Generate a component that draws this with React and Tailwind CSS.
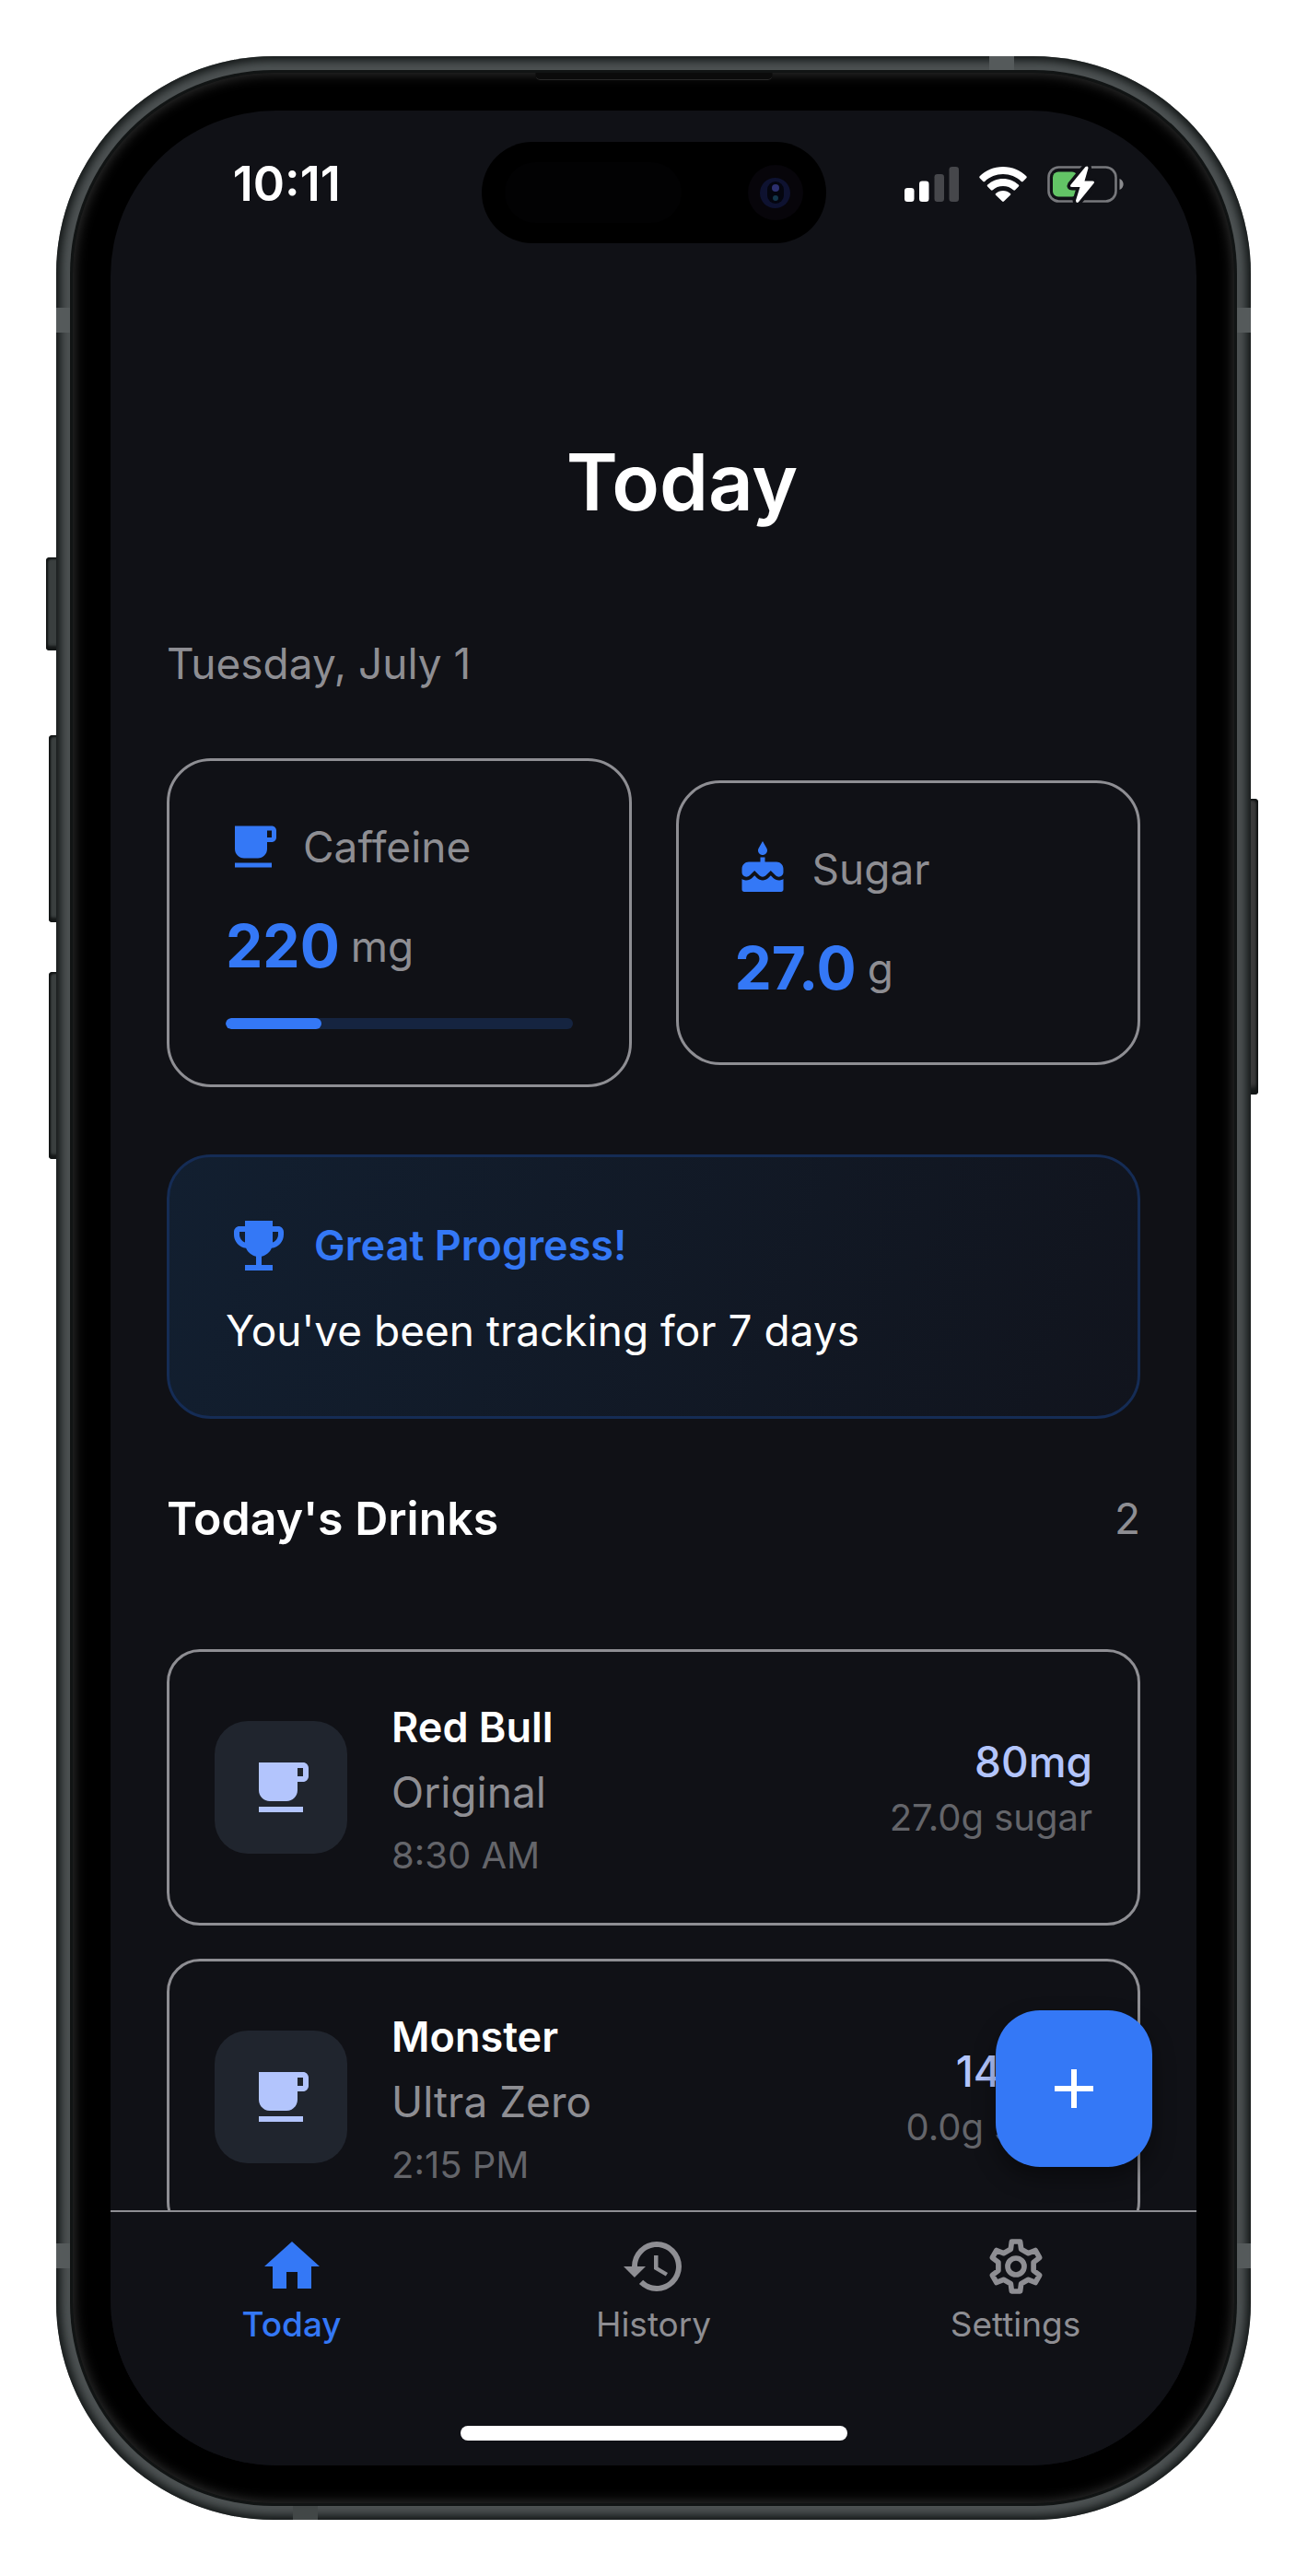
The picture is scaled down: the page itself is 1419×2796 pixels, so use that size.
const inter = "font-['Inter','Liberation_Sans',sans-serif]";

function Icon({ d, className }) {
  return (
    <svg viewBox="0 0 24 24" fill="currentColor" fillRule="evenodd" aria-hidden="true" className={className}>
      <path d={d} />
    </svg>
  );
}

const CUP = "M20 3H4v10c0 2.21 1.79 4 4 4h6c2.21 0 4-1.79 4-4v-3h2c1.11 0 2-.9 2-2V5c0-1.11-.89-2-2-2zm0 5h-2V5h2v3zM4 19h16v2H4z";
const CAKE = "M12 6c1.11 0 2-.9 2-2 0-.38-.1-.73-.29-1.03L12 0l-1.71 2.97c-.19.3-.29.65-.29 1.03 0 1.1.9 2 2 2zm4.6 9.99l-1.07-1.07-1.08 1.07c-1.3 1.3-3.58 1.31-4.89 0l-1.07-1.07-1.09 1.07C6.75 16.64 5.88 17 4.96 17c-.73 0-1.4-.23-1.96-.61V21c0 .55.45 1 1 1h16c.55 0 1-.45 1-1v-4.61c-.56.38-1.23.61-1.96.61-.92 0-1.79-.36-2.44-1.01zM18 9h-5V7h-2v2H6c-1.66 0-3 1.34-3 3v1.54c0 1.08.88 1.96 1.96 1.96.52 0 1.02-.2 1.38-.57l2.14-2.13 2.13 2.13c.74.74 2.03.74 2.77 0l2.14-2.13 2.13 2.13c.37.37.86.57 1.38.57 1.08 0 1.96-.88 1.96-1.96V12C21 10.34 19.66 9 18 9z";
const TROPHY = "M19 5h-2V3H7v2H5c-1.1 0-2 .9-2 2v1c0 2.55 1.92 4.63 4.39 4.94.63 1.5 1.98 2.63 3.61 2.96V19H7v2h10v-2h-4v-3.1c1.63-.33 2.98-1.46 3.61-2.96C19.08 12.63 21 10.55 21 8V7c0-1.1-.9-2-2-2zM5 8V7h2v3.82C5.84 10.4 5 9.3 5 8zm14 0c0 1.3-.84 2.4-2 2.82V7h2v1z";
const HOME = "M10 20v-6h4v6h5v-8h3L12 3 2 12h3v8z";
const HISTORY = "M13 3a9 9 0 0 0-9 9H1l3.89 3.89.07.14L9 12H6c0-3.87 3.13-7 7-7s7 3.13 7 7-3.13 7-7 7c-1.93 0-3.68-.79-4.94-2.06l-1.42 1.42A8.954 8.954 0 0 0 13 21a9 9 0 0 0 0-18zm-1 5v5l4.28 2.54.72-1.21-3.5-2.08V8H12z";
const PLUS = "M19 13h-6v6h-2v-6H5v-2h6V5h2v6h6z";

const TOOTH = [[-1.88, -6.27], [-1.53, -9], [1.53, -9], [1.88, -6.27]];
const GEAR_POINTS = [0, 60, 120, 180, 240, 300]
  .flatMap((deg) => {
    const c = Math.cos((deg * Math.PI) / 180);
    const s = Math.sin((deg * Math.PI) / 180);
    return TOOTH.map(([x, y]) => `${(12 + x * c - y * s).toFixed(2)},${(12 + x * s + y * c).toFixed(2)}`);
  })
  .join(" ");

function Gear({ className }) {
  return (
    <svg viewBox="0 0 24 24" fill="none" stroke="currentColor" strokeWidth="1.900" strokeLinejoin="round" aria-hidden="true" className={className}>
      <polygon points={GEAR_POINTS} />
      <circle cx="12" cy="12" r="3" />
    </svg>
  );
}

function StatusIcons() {
  return (
    <div className="flex items-center gap-[22px] text-white">
      <svg viewBox="0 0 59 38" className="h-[38px] w-[59px]" role="img" aria-label="Signal">
        <rect x="0" y="23" width="10.500" height="15" rx="3.300" fill="#fff" />
        <rect x="16" y="15.600" width="10.500" height="22.400" rx="3.300" fill="#fff" />
        <rect x="32.500" y="8" width="10.500" height="30" rx="3.300" fill="#46474b" />
        <rect x="48.500" y="0" width="10.500" height="38" rx="3.300" fill="#46474b" />
      </svg>
      <svg viewBox="0 0 52 38" className="h-[38px] w-[52px]" role="img" aria-label="Wi-Fi">
        <path fill="#fff" d="M26 0C36 0 45 4 51.300 10.300q.9.900 0 1.900l-3.700 3.700q-.9.900-1.800 0C40.500 10.900 33.500 8 26 8S11.500 10.900 6.200 15.900q-.9.900-1.800 0L.7 12.200q-.9-1 0-1.900C7 4 16 0 26 0zM26 13c6.500 0 12.400 2.500 16.800 6.600q1 .9 0 1.900l-3.700 3.700q-.9.900-1.900 0C34.300 22.500 30.300 21 26 21s-8.300 1.500-11.200 4.200q-1 .9-1.900 0l-3.700-3.700q-1-1 0-1.900C13.600 15.500 19.500 13 26 13zM26 26c3 0 5.700 1 7.900 2.900q1 .9 0 1.900l-7 6.800q-.9.800-1.800 0l-7-6.800q-1-1 0-1.900C20.300 27 23 26 26 26z" />
      </svg>
      <svg viewBox="0 0 83 40" className="h-[40px] w-[83px] overflow-visible" role="img" aria-label="Battery charging">
        <rect x="1.500" y="1.500" width="73" height="37" rx="11" fill="none" stroke="#77787c" strokeWidth="2.600" />
        <path d="M78.500 14c5.500 2 5.500 10 0 12z" fill="#8a8b8e" />
        <rect x="6" y="6.500" width="27" height="27" rx="6" fill="#63c466" />
        <path d="M41.500 1 25.500 20.500q-1.500 2.500 1.500 2.500h8.500L31 37.500q0 3.500 2.800 2L50.500 19q1.500-2.500-1.500-2.500h-8.500L44.500 2.500q0-3-3-1.500z" fill="#fff" stroke="#101116" strokeWidth="7" paintOrder="stroke" strokeLinejoin="round" />
      </svg>
    </div>
  );
}

function StatusBar() {
  return (
    <header className="grid grid-cols-[1fr_374px_1fr] items-center pt-[34px]">
      <time className="pr-[20px] pb-[18px] text-center text-[52px] leading-[60px] font-semibold text-white">10:11</time>
      <div className="flex h-[110px] items-center justify-between rounded-full bg-black px-[25px]">
        <div className="h-[66px] w-[192px] rounded-full bg-[#020203]" />
        <div className="flex size-[60px] items-center justify-center rounded-full bg-[#07050a]">
          <div className="flex size-[33px] items-center justify-center rounded-full bg-[#0e1230]">
            <div className="flex h-[24px] w-[18px] flex-col items-center justify-between rounded-full bg-[#04050f] py-[3px]">
              <div className="size-[8px] rounded-full bg-[#2c2f6e]" />
              <div className="size-[6px] rounded-full bg-[#13364a]" />
            </div>
          </div>
        </div>
      </div>
      <div className="flex justify-center pb-[18px] pl-[6px]">
        <StatusIcons />
      </div>
    </header>
  );
}

function StatCard({ icon, label, value, unit, progress }) {
  return (
    <section className="flex-1 rounded-[48px] border-3 border-[#8e8e93] px-[61px] py-[60px]">
      <div className="flex h-[66px] items-center gap-[24px]">
        <Icon d={icon} className="size-[60px] text-[#3478f6]" />
        <h2 className="text-[46px] leading-[66px] text-[#8e8e93]">{label}</h2>
      </div>
      <p className="mt-[33px] flex h-[84px] items-center gap-[12px]">
        <span className="text-[64px] leading-[84px] font-bold text-[#3478f6]">{value}</span>
        <span className="text-[46px] leading-[66px] text-[#8e8e93]">{unit}</span>
      </p>
      {progress !== undefined && (
        <div
          role="progressbar"
          aria-label={label}
          aria-valuenow={progress}
          aria-valuemin={0}
          aria-valuemax={100}
          className="mt-[36px] h-[12px] overflow-hidden rounded-full bg-[#152440]"
        >
          <div className="h-full rounded-full bg-[#3478f6]" style={{ width: `${progress}%` }} />
        </div>
      )}
    </section>
  );
}

const drinks = [
  { name: "Red Bull", variant: "Original", time: "8:30 AM", caffeine: "80mg", sugar: "27.0g sugar" },
  { name: "Monster", variant: "Ultra Zero", time: "2:15 PM", caffeine: "140mg", sugar: "0.0g sugar" },
];

function DrinkCard({ drink }) {
  return (
    <li className="flex items-center gap-[48px] rounded-[36px] border-3 border-[#8e8e93] p-[49px]">
      <div className="flex size-[144px] items-center justify-center rounded-[36px] bg-[#20252e]">
        <Icon d={CUP} className="size-[72px] text-[#b3c5fd]" />
      </div>
      <div className="flex-1">
        <h3 className="text-[45px] leading-[66px] font-semibold text-white">{drink.name}</h3>
        <p className="mt-[4px] text-[46px] leading-[66px] text-[#8e8e93]">{drink.variant}</p>
        <p className="mt-[12px] text-[40px] leading-[48px] text-[#64656a]">{drink.time}</p>
      </div>
      <div className="text-right">
        <p className="text-[46px] leading-[66px] font-medium text-[#b3c5fd]">{drink.caffeine}</p>
        <p className="text-[40px] leading-[56px] text-[#64656a]">{drink.sugar}</p>
      </div>
    </li>
  );
}

function Tab({ label, active, children }) {
  return (
    <a
      href="#"
      aria-current={active ? "page" : undefined}
      className={
        active
          ? "flex flex-1 flex-col items-center gap-[3px] font-medium text-[#3478f6]"
          : "flex flex-1 flex-col items-center gap-[3px] text-[#8e8e93]"
      }
    >
      {children}
      <span className="text-[37px] leading-[48px]">{label}</span>
    </a>
  );
}

function Screen() {
  return (
    <div className="relative flex min-h-0 flex-1 flex-col overflow-hidden rounded-[180px] bg-[#101116]">
      <StatusBar />
      <main className="min-h-0 flex-1 overflow-hidden px-[61px] pt-[212px]">
        <h1 className="pl-[62px] text-center text-[85px] leading-[96px] font-semibold text-white">Today</h1>
        <p className="mt-[115px] text-[46px] leading-[66px] text-[#8e8e93]">Tuesday, July 1</p>
        <div className="mt-[70px] flex items-center gap-[48px]">
          <StatCard icon={CUP} label="Caffeine" value="220" unit="mg" progress={27.5} />
          <StatCard icon={CAKE} label="Sugar" value="27.0" unit="g" />
        </div>
        <section className="mt-[73px] rounded-[48px] border-3 border-[#152c55] bg-[linear-gradient(110deg,#121f30,#11141d)] px-[61px] py-[60px]">
          <div className="flex items-center gap-[24px] text-[#3478f6]">
            <Icon d={TROPHY} className="size-[72px]" />
            <h2 className="text-[45px] leading-[66px] font-semibold">Great Progress!</h2>
          </div>
          <p className="mt-[23px] text-[46px] leading-[66px] text-white">You've been tracking for 7 days</p>
        </section>
        <div className="mt-[72px] flex items-center justify-between">
          <h2 className="text-[50px] leading-[72px] font-semibold text-white">Today's Drinks</h2>
          <span className="text-[46px] leading-[66px] text-[#8e8e93]">2</span>
        </div>
        <ul className="mt-[106px] flex flex-col gap-[36px]">
          {drinks.map((drink) => (
            <DrinkCard key={drink.name} drink={drink} />
          ))}
        </ul>
      </main>
      <nav className="relative border-t-2 border-[#8e8e93] bg-[#101116] pt-[23px]">
        <button
          type="button"
          aria-label="Add drink"
          className="absolute right-[48px] bottom-full mb-[49px] flex size-[170px] items-center justify-center rounded-[48px] bg-[#3478f6] text-white shadow-[0_12px_24px_rgba(0,0,0,0.4)]"
        >
          <Icon d={PLUS} className="size-[72px]" />
        </button>
        <div className="flex">
          <Tab label="Today" active>
            <Icon d={HOME} className="size-[72px]" />
          </Tab>
          <Tab label="History">
            <Icon d={HISTORY} className="size-[72px]" />
          </Tab>
          <Tab label="Settings">
            <Gear className="size-[72px]" />
          </Tab>
        </div>
        <div className="mx-auto mt-[86px] mb-[27px] h-[16px] w-[420px] rounded-full bg-white" />
      </nav>
    </div>
  );
}

export default function App() {
  return (
    <div className={`${inter} flex h-screen flex-col bg-white p-[61px]`}>
      <div className="relative flex min-h-0 flex-1 flex-col">
        <div className="absolute top-[544px] -left-[11px] h-[101px] w-[14px] rounded-l-[4px] bg-[#3a3f3f] shadow-[inset_2px_2px_2px_#111414,inset_0_-5px_3px_#151818]" />
        <div className="absolute top-[737px] -left-[8px] h-[203px] w-[14px] rounded-l-[4px] bg-[#3a3f3f] shadow-[inset_2px_2px_2px_#111414,inset_0_-5px_3px_#151818]" />
        <div className="absolute top-[994px] -left-[8px] h-[203px] w-[14px] rounded-l-[4px] bg-[#3a3f3f] shadow-[inset_2px_2px_2px_#111414,inset_0_-5px_3px_#151818]" />
        <div className="absolute top-[806px] -right-[8px] h-[321px] w-[14px] rounded-r-[4px] bg-[#3a3a3a] shadow-[inset_-2px_2px_2px_#111414,inset_0_-8px_5px_#151818]" />
        <div className="relative flex min-h-0 flex-1 flex-col overflow-hidden rounded-[236px] bg-[#4d5253] p-[18px] shadow-[inset_0_0_10px_5px_#141818]">
          <div className="absolute top-[273px] left-0 h-[27px] w-[15px] bg-[#555a5b]" />
          <div className="absolute top-[273px] right-0 h-[27px] w-[15px] bg-[#555a5b]" />
          <div className="absolute bottom-[273px] left-0 h-[27px] w-[15px] bg-[#555a5b]" />
          <div className="absolute right-0 bottom-[273px] h-[27px] w-[15px] bg-[#555a5b]" />
          <div className="absolute top-0 right-[257px] h-[15px] w-[27px] bg-[#555a5b]" />
          <div className="absolute bottom-0 left-[257px] h-[15px] w-[27px] bg-[#424747]" />
          <div className="relative flex min-h-0 flex-1 flex-col rounded-[218px] bg-black p-[41px] shadow-[0_0_0_3px_#111414,inset_0_0_14px_1px_#343434]">
            <div className="absolute top-0 left-1/2 h-[8px] w-[257px] -translate-x-1/2 rounded-b-[5px] border-b border-[#2a2a2a] bg-[#0b0b0b]" />
            <Screen />
          </div>
        </div>
      </div>
    </div>
  );
}
